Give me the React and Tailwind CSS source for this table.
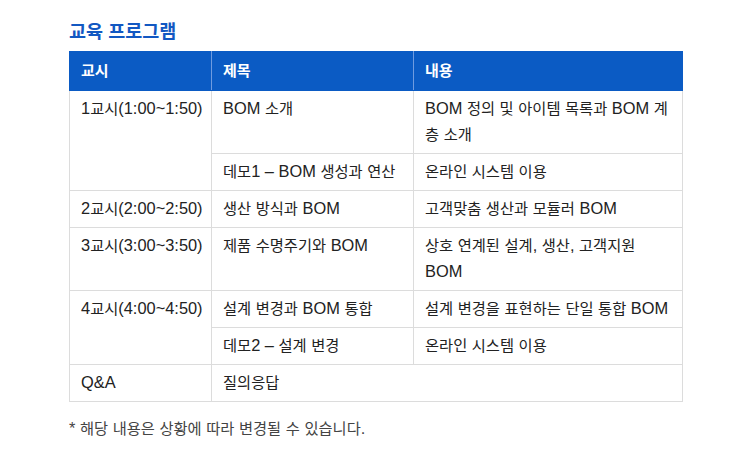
import React from "react";

// 한글은 좁게, 라틴/숫자는 크게 보이는 원본 폰트 비율을 흉내냄
const Mixed = ({ text }) =>
  text.split(/([가-힣]+)/).map((part, i) =>
    part === "" ? null : /[가-힣]/.test(part) ? (
      <span key={i} className="text-[15.3px] leading-[18px]">
        {part}
      </span>
    ) : (
      <span key={i} className="text-[16.4px] leading-[18px]">
        {part}
      </span>
    )
  );

const rows = [
  { time: "1교시(1:00~1:50)", span: 2, title: "BOM 소개", desc: "BOM 정의 및 아이템 목록과 BOM 계층 소개" },
  { title: "데모1 – BOM 생성과 연산", desc: "온라인 시스템 이용" },
  { time: "2교시(2:00~2:50)", span: 1, title: "생산 방식과 BOM", desc: "고객맞춤 생산과 모듈러 BOM" },
  { time: "3교시(3:00~3:50)", span: 1, title: "제품 수명주기와 BOM", desc: "상호 연계된 설계, 생산, 고객지원 BOM" },
  { time: "4교시(4:00~4:50)", span: 2, title: "설계 변경과 BOM 통합", desc: "설계 변경을 표현하는 단일 통합 BOM" },
  { title: "데모2 – 설계 변경", desc: "온라인 시스템 이용" },
];

const cell = "border border-[#dcdcdc] px-[11px] py-[5px] align-top";

export default function App() {
  return (
    <div
      className="w-[750px] h-[466px] bg-white pt-[19px] pl-[69px] text-[#222] text-[15px] leading-[26px]"
      style={{ fontFamily: '"Liberation Sans", "Noto Sans CJK KR", sans-serif' }}
    >
      <h2 className="text-[18.5px] font-bold text-[#1258c2] leading-[25px] mb-[7px]">교육 프로그램</h2>
      <table className="w-[614px] border-collapse table-fixed">
        <colgroup>
          <col className="w-[142px]" />
          <col className="w-[202px]" />
          <col />
        </colgroup>
        <thead>
          <tr className="bg-[#0b5bc4] text-white font-bold">
            <th className="border border-[#0b5bc4] border-r-[#6f9be0] px-[11px] py-[6px] text-left font-bold">교시</th>
            <th className="border border-[#0b5bc4] border-r-[#6f9be0] px-[11px] py-[6px] text-left font-bold">제목</th>
            <th className="border border-[#0b5bc4] px-[11px] py-[6px] text-left font-bold">내용</th>
          </tr>
        </thead>
        <tbody>
          {rows.map((r, i) => (
            <tr key={i}>
              {r.time && (
                <td rowSpan={r.span} className={`${cell} whitespace-nowrap`}>
                  <Mixed text={r.time} />
                </td>
              )}
              <td className={cell}>
                <Mixed text={r.title} />
              </td>
              <td className={cell}>
                <Mixed text={r.desc} />
              </td>
            </tr>
          ))}
          <tr>
            <td className={cell}>
              <Mixed text="Q&A" />
            </td>
            <td colSpan={2} className={cell}>
              <Mixed text="질의응답" />
            </td>
          </tr>
        </tbody>
      </table>
      <p className="mt-[16px] text-[#444] leading-[22px]">
        <Mixed text="* 해당 내용은 상황에 따라 변경될 수 있습니다." />
      </p>
    </div>
  );
}
